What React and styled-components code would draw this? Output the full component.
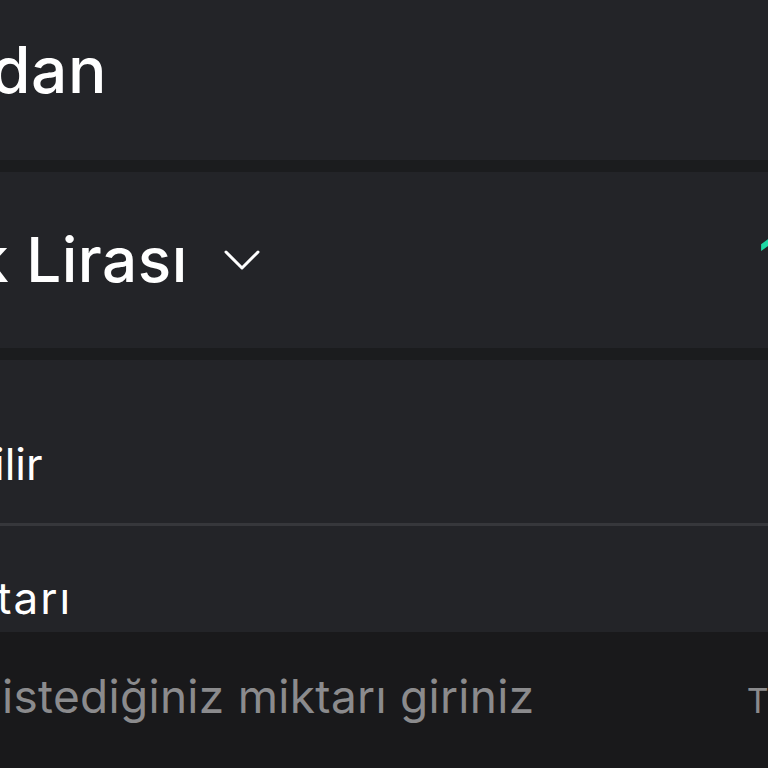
import React from 'react';
import styled, { createGlobalStyle } from 'styled-components';

const GlobalStyle = createGlobalStyle`
  html, body {
    margin: 0;
    padding: 0;
    background: #1b1c1e;
  }
  body {
    font-family: Inter, "Noto Sans", sans-serif;
    color: #ffffff;
  }
`;

const Screen = styled.div`
  width: 768px;
  height: 768px;
  overflow: hidden;
  display: flex;
  flex-direction: column;
  gap: 12px;
  background: #1b1c1e;
`;

const Card = styled.section`
  background: #232428;
  display: flex;
  flex-direction: column;
`;

const Row = styled.div`
  height: ${(p) => p.h}px;
  box-sizing: border-box;
  display: flex;
  align-items: ${(p) => p.align || 'center'};
  justify-content: space-between;
  padding-top: ${(p) => p.pt || 0}px;
  overflow: hidden;
  white-space: nowrap;
  border-bottom: ${(p) => (p.divider ? '3px solid #36373b' : 'none')};
`;

const Title = styled.span`
  font-size: ${(p) => p.size}px;
  font-weight: 500;
  line-height: 1;
  letter-spacing: 0.5px;
  margin-left: ${(p) => p.shift || 0}px;
`;

const Picker = styled.div`
  display: flex;
  align-items: center;
  gap: 36px;
`;

const Chevron = () => (
  <svg width='36' height='22' viewBox='0 0 36 22' fill='none'>
    <path
      d='M2 3 L18 19 L34 3'
      stroke='#ffffff'
      strokeWidth='3'
      strokeLinecap='round'
      strokeLinejoin='round'
    />
  </svg>
);

const Amount = styled.span`
  font-size: 62px;
  font-weight: 500;
  line-height: 1;
  color: #1fd8a4;
  margin-right: -16px;
  flex-shrink: 0;
`;

const Label = styled.span`
  font-size: 44px;
  font-weight: 400;
  line-height: 1;
  letter-spacing: ${(p) => p.track || 0}px;
  margin-left: ${(p) => p.shift || 0}px;
`;

const InputBox = styled.div`
  flex: 1;
  margin-top: -12px;
  background: #19191b;
  display: flex;
  align-items: center;
  justify-content: space-between;
  padding-bottom: 8px;
  overflow: hidden;
  white-space: nowrap;
`;

const Placeholder = styled.span`
  font-size: 46px;
  letter-spacing: 0.3px;
  color: #8b8b8d;
  margin-left: 2px;
`;

const Unit = styled.span`
  font-size: 34px;
  color: #8b8b8d;
  margin-right: -20px;
  padding-top: 8px;
`;

export default function App() {
  return (
    <>
      <GlobalStyle />
      <Screen>
        <Card>
          <Row h={160} align='flex-start' pt={38}>
            <Title size={64} shift={-9}>dan</Title>
          </Row>
        </Card>
        <Card>
          <Row h={176}>
            <Picker>
              <Title size={62} shift={-26}>k Lirası</Title>
              <Chevron />
            </Picker>
            <Amount>1</Amount>
          </Row>
        </Card>
        <Card>
          <Row h={166} align='flex-start' pt={82} divider>
            <Label shift={-6}>ilir</Label>
          </Row>
          <Row h={106} align='flex-start' pt={50}>
            <Label shift={-3} track={2}>tarı</Label>
          </Row>
        </Card>
        <InputBox>
          <Placeholder>istediğiniz miktarı giriniz</Placeholder>
          <Unit>TL</Unit>
        </InputBox>
      </Screen>
    </>
  );
}
